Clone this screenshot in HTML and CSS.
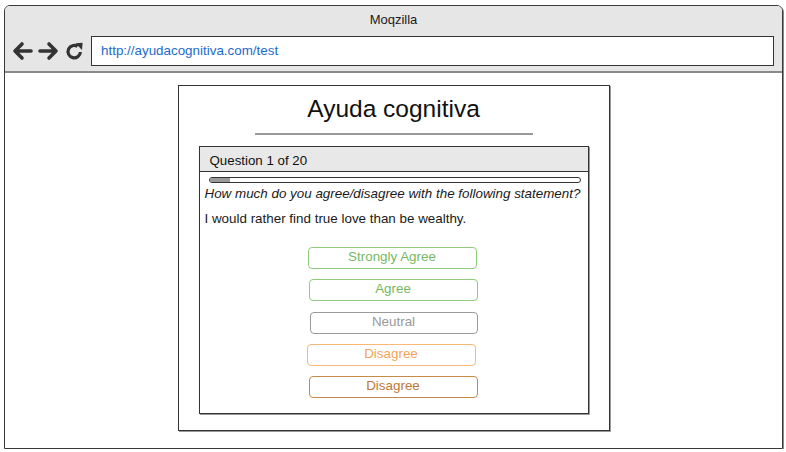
FILE: index.html
```html
<!DOCTYPE html>
<html>
<head>
<meta charset="utf-8">
<link rel="stylesheet" href="styles.css">
</head>
<body>
<div class="window">
  <div class="header">
    <div class="title">Moqzilla</div>
    <div class="toolbar">
      <svg class="icon" width="22" height="20" viewBox="0 0 22 20"><path d="M19 10H4M10 3L3 10L10 17" fill="none" stroke="#333" stroke-width="3.6" stroke-linecap="round" stroke-linejoin="round"/></svg>
      <svg class="icon" width="22" height="20" viewBox="0 0 22 20"><path d="M3 10H18M12 3L19 10L12 17" fill="none" stroke="#333" stroke-width="3.6" stroke-linecap="round" stroke-linejoin="round"/></svg>
      <svg class="icon refresh" width="19" height="20" viewBox="0 0 19 20"><path d="M15.4 11A6.2 6.2 0 1 1 12.6 5.4" fill="none" stroke="#333" stroke-width="3.2"/><path d="M10.5 2.2L17.6 1.8L17 9Z" fill="#333"/></svg>
      <div class="address">http://ayudacognitiva.com/test</div>
    </div>
  </div>
  <div class="content">
    <div class="card">
      <h1 class="heading">Ayuda cognitiva</h1>
      <div class="rule"></div>
      <div class="question">
        <div class="qhead">Question 1 of 20</div>
        <div class="progress"><div class="fill" style="width:20px"></div></div>
        <p class="prompt">How much do you agree/disagree with the following statement?</p>
        <p class="statement">I would rather find true love than be wealthy.</p>
        <div class="answers">
          <div class="btn green s1">Strongly Agree</div>
          <div class="btn green s2">Agree</div>
          <div class="btn gray s3">Neutral</div>
          <div class="btn orange s4">Disagree</div>
          <div class="btn brown s2">Disagree</div>
        </div>
      </div>
    </div>
  </div>
</div>
</body>
</html>
```
FILE: styles.css
```css
html, body {
  margin: 0;
  padding: 0;
  background: #ffffff;
}
body {
  font-family: "Liberation Sans", Arial, sans-serif;
  color: #222;
}
.window {
  margin: 5px 3px 0 4px;
  height: 444px;
  border: 1px solid #3a3a3a;
  border-radius: 6px 6px 0 0;
  box-shadow: 1px 1px 0 #888;
  overflow: hidden;
  box-sizing: border-box;
  display: flex;
  flex-direction: column;
}
.header {
  background: #e6e6e6;
  height: 67px;
  border-bottom: 2px solid #8a8a8a;
  box-sizing: border-box;
  flex: none;
}
.title {
  height: 30px;
  line-height: 27px;
  text-align: center;
  font-size: 13px;
  color: #1a1a1a;
}
.toolbar {
  display: flex;
  align-items: center;
  height: 30px;
  padding-left: 7px;
  padding-right: 8px;
}
.icon {
  flex: none;
  margin-right: 3px;
}
.refresh {
  margin-left: 3px;
  margin-right: 7px;
}
.address {
  flex: 1;
  height: 30px;
  box-sizing: border-box;
  border: 1.5px solid #333;
  background: #fff;
  padding-left: 9px;
  line-height: 27px;
  font-size: 13.4px;
  color: #1b6bcc;
}
.content {
  flex: 1;
  background: #fff;
  padding-top: 12px;
}
.card {
  width: 432px;
  height: 346px;
  box-sizing: border-box;
  margin: 0 auto;
  border: 1px solid #333;
  box-shadow: 1px 1px 0 #999;
  padding: 0 20px;
}
.heading {
  margin: 0;
  padding-top: 9px;
  height: 38px;
  line-height: 28px;
  font-size: 24.5px;
  font-weight: normal;
  text-align: center;
  color: #111;
}
.rule {
  width: 278px;
  height: 2px;
  background: #999;
  margin: 0 auto 11px;
}
.question {
  height: 268px;
  border: 1px solid #333;
  box-shadow: 1px 1px 0 #999;
  box-sizing: border-box;
}
.qhead {
  background: #e8e8e8;
  height: 24px;
  line-height: 27px;
  border-bottom: 1px solid #333;
  padding-left: 10px;
  font-size: 13.3px;
  color: #111;
}
.progress {
  margin: 5px 7px 0 9px;
  height: 6px;
  border: 1.5px solid #333;
  border-radius: 4px;
  box-sizing: border-box;
  overflow: hidden;
}
.fill {
  height: 100%;
  background: #999;
}
.prompt {
  margin: 2px 0 0;
  padding-left: 5px;
  font-size: 13.4px;
  line-height: 17px;
  font-style: italic;
  color: #1a1a1a;
}
.statement {
  margin: 8px 0 0;
  padding-left: 5px;
  font-size: 13.4px;
  line-height: 17px;
  color: #1a1a1a;
}
.answers {
  display: flex;
  flex-direction: column;
  align-items: center;
  gap: 10px;
  margin-top: 20px;
}
.btn {
  width: 169px;
  height: 22px;
  box-sizing: border-box;
  border-radius: 4px;
  border: 1.5px solid;
  text-align: center;
  line-height: 17px;
  font-size: 13.4px;
}
.s1 { margin-left: -3px; }
.s2 { margin-left: -1px; }
.s3 { margin-left: 0; margin-top: 1px; width: 168px; }
.s4 { margin-left: -5px; }
.green {
  border-color: #8fcc7e;
  color: #76b963;
}
.gray {
  border-color: #9a9a9a;
  color: #999;
}
.orange {
  border-color: #f8b878;
  color: #f5a35a;
}
.brown {
  border-color: #c8894a;
  color: #bd7838;
}
```
